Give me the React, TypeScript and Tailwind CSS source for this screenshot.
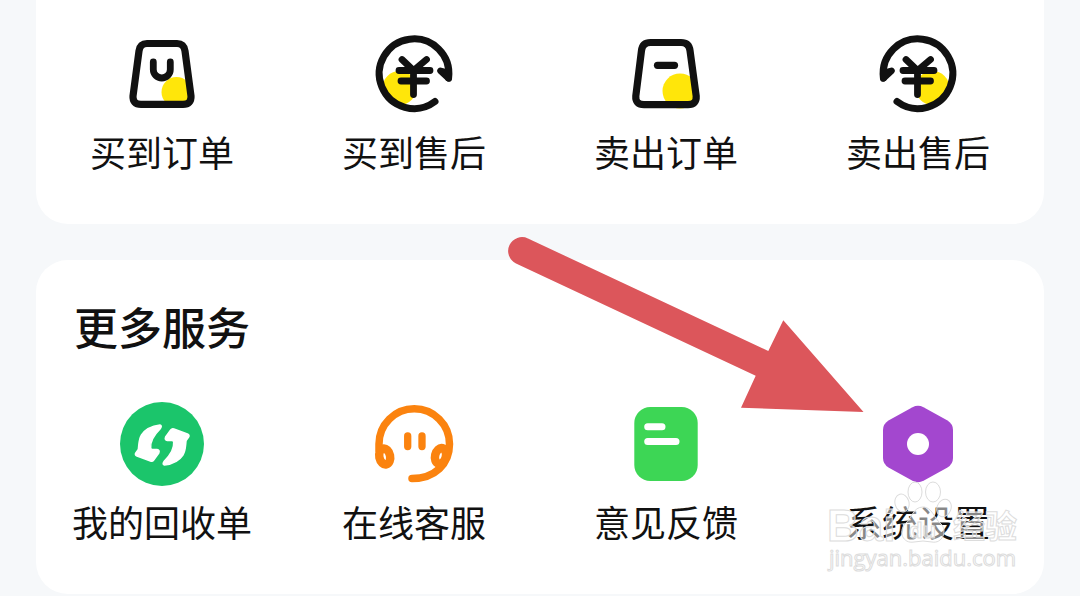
import type { ReactNode } from 'react';

type Item = { label: string; icon: ReactNode };

const iconClass = 'h-24 w-24';

function BuyBagIcon() {
  return (
    <svg viewBox="0 0 96 96" className={iconClass} fill="none" aria-hidden="true">
      <circle cx="62.500" cy="66" r="15" fill="#ffe60a" />
      <path
        d="M33 17.500H63Q70 17.500 71 25L77 70Q77.500 78.300 69 78.300H27Q18.500 78.300 19 70L25 25Q26 17.500 33 17.500Z"
        stroke="#111"
        strokeWidth="7.200"
      />
      <path d="M39.300 36V43.500a8.500 8.500 0 0 0 17 0V36" stroke="#111" strokeWidth="6.800" strokeLinecap="round" />
    </svg>
  );
}

function SellBagIcon() {
  return (
    <svg viewBox="0 0 96 96" className={iconClass} fill="none" aria-hidden="true">
      <circle cx="62" cy="65" r="17.500" fill="#ffe60a" />
      <path
        d="M32.500 16.500H63Q71 16.500 72 24.500L78.200 70Q78.700 78.700 70 78.700H26Q17.300 78.700 17.800 70L23.500 24.500Q24.500 16.500 32.500 16.500Z"
        stroke="#111"
        strokeWidth="7.200"
      />
      <path d="M39.500 39.300H56.500" stroke="#111" strokeWidth="7.200" strokeLinecap="round" />
    </svg>
  );
}

function RefundIcon({ flipped = false }: { flipped?: boolean }) {
  return (
    <svg viewBox="0 0 96 96" className={iconClass} fill="none" stroke="#111" strokeLinecap="round" strokeLinejoin="round" aria-hidden="true">
      <g transform={flipped ? 'matrix(-1 0 0 1 96 0)' : undefined}>
        <circle cx="33.500" cy="62" r="17" fill="#ffe60a" stroke="none" />
        <path d="M69 75.500A34.800 34.800 0 1 1 82.600 52" strokeWidth="7" />
        <path d="M82.600 47V52.500L74.500 44.800Z" fill="#111" strokeWidth="6.500" />
      </g>
      <path d="M36 33.500L47.500 44.500L60.500 33.500M33 44.500H64M35 55H60.500M47.500 44.500V68.500" strokeWidth="6.800" />
    </svg>
  );
}

function RecycleIcon() {
  const arrow =
    'M46 29C38 30 31 33.500 27.500 39C24.500 44 25 49 24.300 53.500L21.800 57Q20.500 59 23 60L36.500 65Q38.500 65.700 39.700 64L44.800 57Q46 54 43 53.500H38.500Q36.800 53.500 36.700 52C36 44.500 40 39 46 33Q48.500 29.500 46 29Z';
  return (
    <svg viewBox="0 0 96 96" className={iconClass} aria-hidden="true">
      <circle cx="48" cy="48" r="42" fill="#1bc56b" />
      <g fill="#fff" stroke="#fff" strokeWidth="1.500" strokeLinejoin="round">
        <path d={arrow} />
        <path d={arrow} transform="rotate(180 48.200 49)" />
      </g>
    </svg>
  );
}

function HeadsetIcon() {
  return (
    <svg viewBox="0 0 96 96" className={iconClass} fill="none" stroke="#fb830f" strokeLinecap="round" aria-hidden="true">
      <path d="M13 54V48A35 35 0 0 1 83.500 48C83.500 68 69 82.500 46 82.500" strokeWidth="7.500" />
      <ellipse cx="18.700" cy="60.500" rx="5.400" ry="8" strokeWidth="8.500" transform="rotate(-12 18.700 60.500)" />
      <ellipse cx="74.500" cy="60" rx="5.400" ry="8" strokeWidth="8.500" transform="rotate(14 74.500 60)" />
      <path d="M41.700 40V50.500M56 40V50.500" strokeWidth="7.300" />
    </svg>
  );
}

function FeedbackIcon() {
  return (
    <svg viewBox="0 0 96 96" className={iconClass} aria-hidden="true">
      <rect x="16.300" y="11" width="63.400" height="74" rx="16" fill="#3dd655" />
      <path d="M29.700 30.700H44M29.700 45.500H58" stroke="#fff" strokeWidth="7" strokeLinecap="round" />
    </svg>
  );
}

function SettingsIcon() {
  return (
    <svg viewBox="0 0 96 96" className={iconClass} aria-hidden="true">
      <path
        d="M42.500 11.200Q48 8.500 53.500 11.200L77.500 24.500Q83 28 83 34V62Q83 68 77.500 71.500L53.500 84.800Q48 87.500 42.500 84.800L18.500 71.500Q13 68 13 62V34Q13 28 18.500 24.500Z"
        fill="#a347cf"
      />
      <circle cx="48" cy="48" r="11" fill="#fff" />
    </svg>
  );
}

function PointerArrow() {
  return (
    <svg
      viewBox="0 0 360 180"
      className="pointer-events-none absolute -top-[26px] right-[178px] z-10 h-[180px] w-[360px]"
      aria-hidden="true"
    >
      <path d="M22 4.500L262.300 117L277.300 86.300L357.500 178L235 173.700L249.700 141.700L10 29.500A13.800 13.800 0 0 1 22 4.500Z" fill="#dc565b" />
    </svg>
  );
}

function Watermark() {
  return (
    <svg
      viewBox="0 0 200 100"
      className="pointer-events-none absolute right-5 bottom-4 z-10 h-[100px] w-[200px]"
      fill="#fff"
      fillOpacity="0.5"
      stroke="#dcdcdc"
      strokeWidth="1"
      aria-hidden="true"
    >
      <ellipse cx="91" cy="14" rx="7" ry="10" />
      <ellipse cx="109" cy="14" rx="7.500" ry="10" />
      <ellipse cx="78" cy="25" rx="7" ry="9" transform="rotate(-15 78 25)" />
      <ellipse cx="120" cy="30" rx="7" ry="9" transform="rotate(20 120 30)" />
      <path d="M99 29C108 29 110 40 117 46C124 53 118 66 108 64Q99 62 90 64C79 66 74 54 81 46C88 40 89 29 99 29Z" />
      <g className="font-['Liberation_Sans','Noto_Sans_CJK_SC',sans-serif] font-bold">
        <text x="3" y="63" fontSize="44">Bai</text>
        <text x="85" y="60" fontSize="22">du</text>
        <text x="129" y="60" fontSize="32">经验</text>
      </g>
      <text x="5" y="88" fontSize="22" className="font-['Open_Sans',sans-serif]">jingyan.baidu.com</text>
    </svg>
  );
}

const orders: Item[] = [
  { label: '买到订单', icon: <BuyBagIcon /> },
  { label: '买到售后', icon: <RefundIcon /> },
  { label: '卖出订单', icon: <SellBagIcon /> },
  { label: '卖出售后', icon: <RefundIcon flipped /> },
];

const services: Item[] = [
  { label: '我的回收单', icon: <RecycleIcon /> },
  { label: '在线客服', icon: <HeadsetIcon /> },
  { label: '意见反馈', icon: <FeedbackIcon /> },
  { label: '系统设置', icon: <SettingsIcon /> },
];

function IconGrid({ items }: { items: Item[] }) {
  return (
    <div className="grid grid-cols-4">
      {items.map((item) => (
        <button key={item.label} type="button" className="flex flex-col items-center gap-2">
          {item.icon}
          <span className="text-[36px] leading-[42px] whitespace-nowrap">{item.label}</span>
        </button>
      ))}
    </div>
  );
}

export default function App() {
  return (
    <main className="flex min-h-screen flex-col gap-9 overflow-hidden bg-[#f6f8fa] px-9 font-['Noto_Sans_CJK_SC',sans-serif] text-[#111]">
      <section className="rounded-b-[32px] bg-white pt-[26px] pb-[52px]">
        <IconGrid items={orders} />
      </section>

      <section className="relative rounded-[32px] bg-white pt-[38px] pb-[52px]">
        <h2 className="mb-[42px] px-[38px] text-[44px] leading-14 font-medium">更多服务</h2>
        <IconGrid items={services} />
        <PointerArrow />
        <Watermark />
      </section>
    </main>
  );
}
